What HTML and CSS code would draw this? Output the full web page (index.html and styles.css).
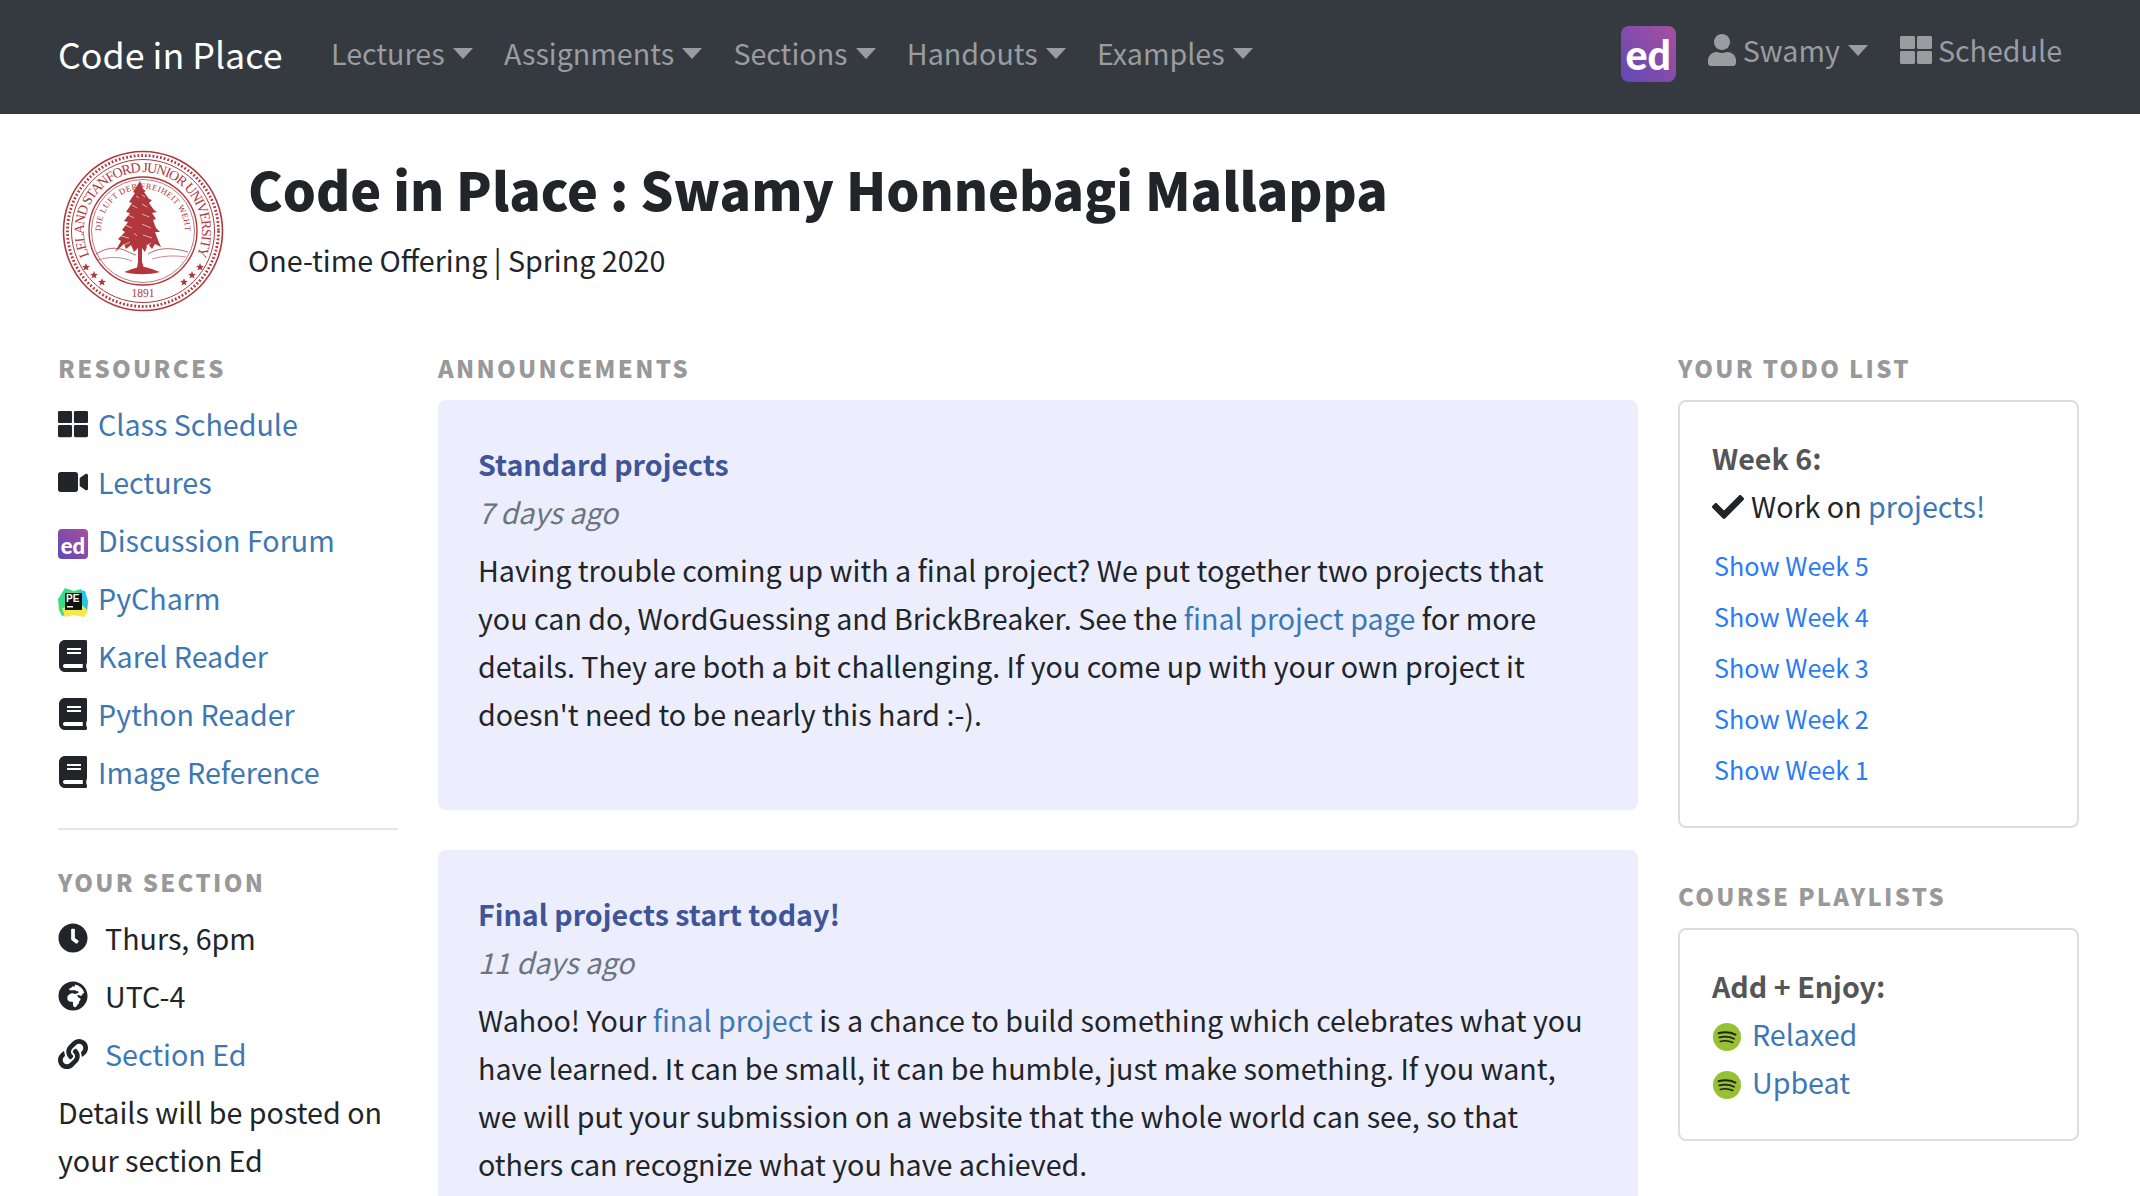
FILE: index.html
```html
<!DOCTYPE html>
<html lang="en">
<head>
    <meta charset="UTF-8">
    <meta name="viewport" content="width=device-width, initial-scale=1.0">
    <title>Code in Place</title>
    <link rel="stylesheet" href="styles.css">
</head>
<body>
    <svg class="icon-defs" aria-hidden="true">
        <symbol id="i-grid" viewBox="0 0 512 512"><path d="M296 32h192c13.255 0 24 10.745 24 24v160c0 13.255-10.745 24-24 24H296c-13.255 0-24-10.745-24-24V56c0-13.255 10.745-24 24-24zm-80 0H24C10.745 32 0 42.745 0 56v160c0 13.255 10.745 24 24 24h192c13.255 0 24-10.745 24-24V56c0-13.255-10.745-24-24-24zM0 296v160c0 13.255 10.745 24 24 24h192c13.255 0 24-10.745 24-24V296c0-13.255-10.745-24-24-24H24c-13.255 0-24 10.745-24 24zm296 184h192c13.255 0 24-10.745 24-24V296c0-13.255-10.745-24-24-24H296c-13.255 0-24 10.745-24 24v160c0 13.255 10.745 24 24 24z"/></symbol>
        <symbol id="i-video" viewBox="0 0 576 512"><path d="M336.2 64H47.8C21.4 64 0 85.4 0 111.8v288.4C0 426.6 21.4 448 47.8 448h288.4c26.4 0 47.8-21.4 47.8-47.8V111.8c0-26.4-21.4-47.8-47.8-47.8zm189.4 37.7L416 177.3v157.4l109.6 75.5c21.2 14.6 50.4-.3 50.4-25.8V127.5c0-25.4-29.1-40.4-50.4-25.8z"/></symbol>
        <symbol id="i-user" viewBox="0 0 448 512"><path d="M224 256c70.7 0 128-57.3 128-128S294.7 0 224 0 96 57.3 96 128s57.3 128 128 128zm89.6 32h-16.7c-22.2 10.2-46.9 16-72.9 16s-50.6-5.8-72.9-16h-16.7C60.2 288 0 348.2 0 422.4V464c0 26.5 21.5 48 48 48h352c26.5 0 48-21.5 48-48v-41.6c0-74.2-60.2-134.4-134.4-134.4z"/></symbol>
        <symbol id="i-book" viewBox="0 0 448 512"><path d="M448 360V24c0-13.3-10.7-24-24-24H96C43 0 0 43 0 96v320c0 53 43 96 96 96h328c13.3 0 24-10.7 24-24v-16c0-7.5-3.5-14.3-8.9-18.7-4.2-15.4-4.2-59.3 0-74.7 5.4-4.3 8.9-11.1 8.9-18.6zM128 134c0-3.3 2.7-6 6-6h212c3.3 0 6 2.7 6 6v20c0 3.3-2.7 6-6 6H134c-3.3 0-6-2.7-6-6v-20zm0 64c0-3.3 2.7-6 6-6h212c3.3 0 6 2.7 6 6v20c0 3.3-2.7 6-6 6H134c-3.3 0-6-2.7-6-6v-20zm253.4 250H96c-17.7 0-32-14.3-32-32 0-17.6 14.4-32 32-32h285.4c-1.9 17.1-1.9 46.9 0 64z"/></symbol>
        <symbol id="i-clock" viewBox="0 0 512 512"><path d="M256,8C119,8,8,119,8,256S119,504,256,504,504,393,504,256,393,8,256,8Zm92.49,313h0l-20,25a16,16,0,0,1-22.49,2.5h0l-67-49.72a40,40,0,0,1-15-31.23V112a16,16,0,0,1,16-16h32a16,16,0,0,1,16,16V256l58,42.5A16,16,0,0,1,348.49,321Z"/></symbol>
        <symbol id="i-globe" viewBox="0 0 496 512"><path d="M248 8C111.03 8 0 119.03 0 256s111.03 248 248 248 248-111.03 248-248S384.97 8 248 8zm160 215.5v6.93c0 5.87-3.32 11.24-8.57 13.86l-15.39 7.7a15.485 15.485 0 0 1-15.53-.97l-18.21-12.14a15.52 15.52 0 0 0-13.5-1.81l-2.65.88c-9.7 3.23-13.66 14.79-7.99 23.3l13.24 19.86c2.87 4.31 7.71 6.9 12.89 6.9h8.21c8.56 0 15.5 6.94 15.5 15.5v11.34c0 3.35-1.09 6.62-3.1 9.3l-18.74 24.98c-1.42 1.9-2.39 4.1-2.83 6.43l-4.3 22.83c-.62 3.29-2.29 6.29-4.76 8.56a159.608 159.608 0 0 0-25 29.16l-13.03 19.55a27.756 27.756 0 0 1-23.09 12.36c-10.51 0-20.12-5.94-24.82-15.34a78.902 78.902 0 0 1-8.33-35.29V367.5c0-8.56-6.94-15.5-15.5-15.5h-25.88c-14.49 0-28.38-5.76-38.63-16a54.659 54.659 0 0 1-16-38.63v-14.06c0-17.19 8.1-33.38 21.85-43.7l27.58-20.69a54.663 54.663 0 0 1 32.78-10.93h.89c8.48 0 16.85 1.97 24.43 5.77l14.72 7.36c3.68 1.84 7.93 2.14 11.83.84l47.31-15.77c6.33-2.11 10.6-8.03 10.6-14.7 0-8.56-6.94-15.5-15.5-15.5h-10.09c-4.11 0-8.05-1.63-10.96-4.54l-6.92-6.92a15.493 15.493 0 0 0-10.96-4.54H199.5c-8.56 0-15.5-6.94-15.5-15.5v-4.4c0-7.11 4.84-13.31 11.74-15.04l14.45-3.61c3.74-.94 7-3.23 9.14-6.44l8.08-12.11c2.87-4.31 7.71-6.9 12.89-6.9h24.2c8.56 0 15.5-6.94 15.5-15.5v-21.7C359.23 71.63 422.86 131.02 441.93 208H423.5c-8.56 0-15.5 6.94-15.5 15.5z"/></symbol>
        <symbol id="i-link" viewBox="0 0 512 512"><path d="M326.612 185.391c59.747 59.809 58.927 155.698.36 214.59-.11.12-.24.25-.36.37l-67.2 67.2c-59.27 59.27-155.699 59.262-214.96 0-59.27-59.26-59.27-155.7 0-214.96l37.106-37.106c9.84-9.84 26.786-3.3 27.294 10.606.648 17.722 3.826 35.527 9.69 52.721 1.986 5.822.567 12.262-3.783 16.612l-13.087 13.087c-28.026 28.026-28.905 73.66-1.155 101.96 28.024 28.579 74.086 28.749 102.325.51l67.2-67.19c28.191-28.191 28.073-73.757 0-101.83-3.701-3.694-7.429-6.564-10.341-8.569a16.037 16.037 0 0 1-6.947-12.606c-.396-10.567 3.348-21.456 11.698-29.806l21.054-21.055c5.521-5.521 14.182-6.199 20.584-1.731a152.482 152.482 0 0 1 20.522 17.197zM467.547 44.449c-59.261-59.262-155.69-59.27-214.96 0l-67.2 67.2c-.12.12-.25.25-.36.37-58.566 58.892-59.387 154.781.36 214.59a152.454 152.454 0 0 0 20.521 17.196c6.402 4.468 15.064 3.789 20.584-1.731l21.054-21.055c8.35-8.35 12.094-19.239 11.698-29.806a16.037 16.037 0 0 0-6.947-12.606c-2.912-2.005-6.64-4.875-10.341-8.569-28.073-28.073-28.191-73.639 0-101.83l67.2-67.19c28.239-28.239 74.3-28.069 102.325.51 27.75 28.3 26.872 73.934-1.155 101.96l-13.087 13.087c-4.35 4.35-5.769 10.79-3.783 16.612 5.864 17.194 9.042 34.999 9.69 52.721.509 13.906 17.454 20.446 27.294 10.606l37.106-37.106c59.271-59.259 59.271-155.699.001-214.959z"/></symbol>
        <symbol id="i-check" viewBox="0 0 512 512"><path d="M173.898 439.404l-166.4-166.4c-9.997-9.997-9.997-26.206 0-36.204l36.203-36.204c9.997-9.998 26.207-9.998 36.204 0L192 312.69 432.095 72.596c9.997-9.997 26.207-9.997 36.204 0l36.203 36.204c9.997 9.997 9.997 26.206 0 36.204l-294.4 294.401c-9.998 9.997-26.207 9.997-36.204-.001z"/></symbol>
        <symbol id="i-spotify" viewBox="0 0 28 28">
            <circle cx="14" cy="14" r="14" fill="#97c034"/>
            <g fill="none" stroke="#1c2412" stroke-linecap="round">
                <path d="M5.500 10.200c5.500-1.500 12-1.100 17 1.400" stroke-width="2"/>
                <path d="M6.300 14.400c4.800-1.200 10.500-.8 14.800 1.300" stroke-width="1.800"/>
                <path d="M7.200 18.400c4.200-1 8.800-.7 12.600 1.100" stroke-width="1.500"/>
            </g>
        </symbol>
        <symbol id="i-star" viewBox="0 0 10 10"><path d="M5 0l1.300 3.400 3.700.2-2.900 2.300 1 3.600L5 7.400 1.900 9.500l1-3.600L0 3.600l3.700-.2z"/></symbol>
    </svg>

    <nav class="navbar">
        <a class="brand" href="#">Code in Place</a>
        <ul class="nav-menu">
            <li class="nav-link caret">Lectures</li>
            <li class="nav-link caret">Assignments</li>
            <li class="nav-link caret">Sections</li>
            <li class="nav-link caret">Handouts</li>
            <li class="nav-link caret">Examples</li>
        </ul>
        <div class="nav-right">
            <span class="ed-logo ed-large">ed</span>
            <span class="nav-link caret nav-user"><svg class="nav-icon user-icon"><use href="#i-user"/></svg>Swamy</span>
            <span class="nav-link nav-schedule"><svg class="nav-icon grid-icon"><use href="#i-grid"/></svg>Schedule</span>
        </div>
    </nav>

    <header class="page-header">
        <svg class="seal" viewBox="0 0 162 162" role="img" aria-label="Stanford seal">
            <defs>
                <path id="seal-outer" d="M81 140a59 59 0 1 1 .01 0"/>
                <path id="seal-motto" d="M81 123a42 42 0 1 1 .01 0"/>
            </defs>
            <g fill="none" stroke="#b0373c">
                <circle cx="81" cy="81" r="79.500" stroke-width="1.600"/>
                <circle cx="81" cy="81" r="75.500" stroke-width="2.800" stroke-dasharray="1.800 2"/>
                <circle cx="81" cy="81" r="71.500" stroke-width="1"/>
                <circle cx="81" cy="81" r="54" stroke-width="1.400"/>
                <circle cx="81" cy="81" r="51.500" stroke-width=".7"/>
                <path d="M34 104c8-5 16-7 25-5 5 1 10 5 15 6M86 104c8-5 20-8 40-2" stroke-width=".8"/>
                <path d="M36 110c12-4 24-3 34 1M90 109c10-3 22-4 34-2" stroke-width=".6"/>
            </g>
            <g class="seal-text">
                <text font-size="14"><textPath href="#seal-outer" startOffset="50%" text-anchor="middle" textLength="236">LELAND STANFORD JUNIOR UNIVERSITY</textPath></text>
                <text font-size="8.500"><textPath href="#seal-motto" startOffset="50%" text-anchor="middle" textLength="132">DIE LUFT DER FREIHEIT WEHT</textPath></text>
                <text x="81" y="147" font-size="11.500" text-anchor="middle">1891</text>
            </g>
            <path class="seal-tree" d="M78 31L81 39L84 41L82 42L87 49L90 50L87 53L92 60L95 62L90 63L94 69L91 70L94 78L98 82L93 82L96 90L99 97L93 94L90 99L86 94L83 102L80 98L80 112L82 118L86 122L72 122L75 118L76 112L76 98L72 102L69 95L64 99L62 94L53 102L59 91L56 89L63 82L60 80L66 72L62 71L68 63L64 62L70 53L67 52L73 43L71 42Z"/>
            <path class="seal-flecks" d="M74 46l3 2M80 45l3 2M70 55l5 3M80 54l5 3M66 65l6 3M80 64l7 3M63 75l7 3M80 74l9 4M59 86l8 2M72 83l3 3M81 85l9 3M62 95l6-3M84 96l5-3"/>
            <path class="seal-tree" d="M62 122c8-3 13-5 18-5s10 2 18 5c-11 3-25 3-36 0z"/>
            <g class="seal-stars">
                <use href="#i-star" x="20" y="113" width="8" height="8"/>
                <use href="#i-star" x="28" y="121" width="8" height="8"/>
                <use href="#i-star" x="36" y="128" width="8" height="8"/>
                <use href="#i-star" x="134" y="113" width="8" height="8"/>
                <use href="#i-star" x="126" y="121" width="8" height="8"/>
                <use href="#i-star" x="118" y="128" width="8" height="8"/>
            </g>
        </svg>
        <div class="header-text">
            <h1>Code in Place : Swamy Honnebagi Mallappa</h1>
            <p class="subtitle">One-time Offering | Spring 2020</p>
        </div>
    </header>

    <main class="layout">
        <aside class="col-left">
            <h2 class="section-title">Resources</h2>
            <ul class="side-list">
                <li class="side-item"><svg class="side-icon"><use href="#i-grid"/></svg><a href="#">Class Schedule</a></li>
                <li class="side-item"><svg class="side-icon"><use href="#i-video"/></svg><a href="#">Lectures</a></li>
                <li class="side-item"><span class="ed-logo ed-small">ed</span><a href="#">Discussion Forum</a></li>
                <li class="side-item">
                    <svg class="side-icon pe-icon" viewBox="0 0 30 30">
                        <path d="M0 12 7 1l9 3 7-2 7 12-1 9-6 6-10-2-9 2-3-6z" fill="#3ddc84"/>
                        <path d="M21 3l6 1 3 10-1 9-5-5z" fill="#28c4e8"/>
                        <path d="M4 21l20-3 6 6-4 6-10-2-9 2z" fill="#f4e84a"/>
                        <rect x="7" y="6" width="17" height="17" fill="#111"/>
                        <text class="pe-text" x="8" y="14.500">PE</text>
                        <rect x="9" y="19" width="6" height="1.500" fill="#fff"/>
                    </svg><a href="#">PyCharm</a>
                </li>
                <li class="side-item"><svg class="side-icon book-icon"><use href="#i-book"/></svg><a href="#">Karel Reader</a></li>
                <li class="side-item"><svg class="side-icon book-icon"><use href="#i-book"/></svg><a href="#">Python Reader</a></li>
                <li class="side-item"><svg class="side-icon book-icon"><use href="#i-book"/></svg><a href="#">Image Reference</a></li>
            </ul>
            <hr class="side-rule">
            <h2 class="section-title">Your Section</h2>
            <ul class="side-list section-list">
                <li class="side-item"><svg class="side-icon"><use href="#i-clock"/></svg>Thurs, 6pm</li>
                <li class="side-item"><svg class="side-icon"><use href="#i-globe"/></svg>UTC-4</li>
                <li class="side-item"><svg class="side-icon"><use href="#i-link"/></svg><a href="#">Section Ed</a></li>
            </ul>
            <p class="side-note">Details will be posted on your section Ed</p>
        </aside>

        <section class="col-center">
            <h2 class="section-title">Announcements</h2>
            <article class="announcement">
                <h3 class="announcement-title">Standard projects</h3>
                <p class="announcement-date">7 days ago</p>
                <p class="announcement-body">Having trouble coming up with a final project? We put together two projects that you can do, WordGuessing and BrickBreaker. See the <a href="#">final project page</a> for more details. They are both a bit challenging. If you come up with your own project it doesn't need to be nearly this hard :-).</p>
            </article>
            <article class="announcement">
                <h3 class="announcement-title">Final projects start today!</h3>
                <p class="announcement-date">11 days ago</p>
                <p class="announcement-body">Wahoo! Your <a href="#">final project</a> is a chance to build something which celebrates what you have learned. It can be small, it can be humble, just make something. If you want, we will put your submission on a website that the whole world can see, so that others can recognize what you have achieved.</p>
            </article>
        </section>

        <aside class="col-right">
            <h2 class="section-title">Your Todo List</h2>
            <div class="side-card todo-card">
                <div class="card-heading">Week 6:</div>
                <div class="todo-line"><svg class="check-icon"><use href="#i-check"/></svg>Work on <a href="#">projects!</a></div>
                <ul class="week-list">
                    <li><a href="#">Show Week 5</a></li>
                    <li><a href="#">Show Week 4</a></li>
                    <li><a href="#">Show Week 3</a></li>
                    <li><a href="#">Show Week 2</a></li>
                    <li><a href="#">Show Week 1</a></li>
                </ul>
            </div>
            <h2 class="section-title playlists-title">Course Playlists</h2>
            <div class="side-card">
                <div class="card-heading">Add + Enjoy:</div>
                <div class="playlist-line"><svg class="spotify-icon"><use href="#i-spotify"/></svg><a href="#">Relaxed</a></div>
                <div class="playlist-line"><svg class="spotify-icon"><use href="#i-spotify"/></svg><a href="#">Upbeat</a></div>
            </div>
        </aside>
    </main>
</body>
</html>
```

FILE: styles.css
```css
html, body {
    margin: 0;
    padding: 0;
    height: 100%;
    overflow: hidden;
}

body {
    font-family: "Noto Sans CJK JP", "Noto Sans", sans-serif;
    font-size: 28.650px;
    line-height: 48px;
    color: #212529;
    background: #fff;
}

a {
    color: #3d78b5;
    text-decoration: none;
}

ul {
    list-style: none;
    margin: 0;
    padding: 0;
}

p {
    margin: 0;
}

.icon-defs {
    display: none;
}

/* top bar */
.navbar {
    display: flex;
    align-items: center;
    box-sizing: border-box;
    height: 114px;
    padding: 0 58px 8px;
    background: #343a40;
}

.brand {
    color: #fff;
    font-size: 35.800px;
    margin-right: 48.500px;
}

.nav-menu {
    display: flex;
    gap: 31.300px;
}

.nav-link {
    color: #9a9c9f;
}

.caret::after {
    content: "";
    display: inline-block;
    margin-left: 8px;
    vertical-align: 6px;
    border-top: 11px solid #9a9c9f;
    border-left: 10px solid transparent;
    border-right: 10px solid transparent;
}

.nav-right {
    display: flex;
    align-items: center;
    margin-left: auto;
    gap: 32px;
    padding-right: 20px;
}

.nav-user, .nav-schedule {
    position: relative;
    top: -3px;
}

.nav-icon {
    fill: #9a9c9f;
    vertical-align: -4px;
}

.user-icon {
    width: 28px;
    height: 32px;
    margin-right: 7px;
}

.grid-icon {
    width: 32px;
    height: 32px;
    margin-right: 6px;
}

.ed-logo {
    display: inline-flex;
    align-items: center;
    justify-content: center;
    flex: none;
    color: #fff;
    font-family: "Lato", sans-serif;
    font-weight: 900;
    background: linear-gradient(45deg, #6049b6, #a84f9f);
}

.ed-large {
    box-sizing: border-box;
    width: 55px;
    height: 56px;
    margin-top: 2px;
    padding-top: 2px;
    border-radius: 8px;
    font-size: 41px;
}

.ed-small {
    box-sizing: border-box;
    width: 30px;
    height: 30px;
    margin: 8px 10px 0 0;
    padding-top: 3px;
    border-radius: 4px;
    font-size: 22px;
    line-height: 30px;
}

/* page header */
.page-header {
    display: flex;
    padding: 36px 58px 40px 62px;
}

.seal {
    flex: none;
    width: 162px;
    height: 162px;
    margin-right: 24px;
}

.seal-text {
    font-family: "Liberation Serif", serif;
    fill: #b0373c;
}

.seal-tree, .seal-stars {
    fill: #b0373c;
}

.seal-flecks {
    fill: none;
    stroke: #fff;
    stroke-width: .8;
    opacity: .75;
}

.page-header h1 {
    margin: -3px 0 0;
    font-size: 52.100px;
    line-height: 84px;
    font-weight: 900;
}

.subtitle {
    margin-top: 5px;
}

/* three columns */
.layout {
    display: grid;
    grid-template-columns: 340px 1200px 401px;
    column-gap: 40px;
    padding-left: 58px;
}

.section-title {
    margin: 0 0 16px;
    font-size: 23.800px;
    line-height: 32px;
    font-weight: 900;
    letter-spacing: 2.330px;
    text-transform: uppercase;
    color: #999;
}

.side-item {
    display: flex;
    align-items: center;
    height: 48px;
    margin-bottom: 10px;
}

.side-icon {
    flex: none;
    width: 30px;
    height: 30px;
    margin-right: 10px;
    fill: #212529;
}

.pe-icon {
    margin-top: 8px;
}

.pe-text {
    font-family: "Liberation Sans", sans-serif;
    font-size: 10px;
    font-weight: 700;
    fill: #fff;
}

.book-icon {
    width: 28px;
    height: 32px;
    margin-left: 1px;
    margin-right: 11px;
}

.section-list .side-icon {
    margin-right: 17px;
}

.side-rule {
    margin: 32px 0 36px;
    border: 0;
    border-top: 2px solid #e5e5e5;
}

.announcement {
    padding: 40px 40px 72px;
    margin-bottom: 40px;
    background: #eceefd;
    border-radius: 8px;
}

.announcement-title {
    margin: 0;
    font-size: 28.650px;
    line-height: 48px;
    font-weight: 700;
    color: #3f5597;
}

.announcement-date {
    font-style: italic;
    color: #6c757d;
}

.announcement-body {
    margin-top: 10px;
}

.side-card {
    padding: 32px 32px 33px;
    border: 2px solid #ddd;
    border-radius: 8px;
}

.todo-card {
    padding-bottom: 36px;
}

.card-heading {
    font-weight: 700;
    color: #555;
}

.check-icon {
    width: 32px;
    height: 32px;
    margin-right: 7px;
    fill: #212529;
    vertical-align: -5px;
}

.week-list {
    margin: 14px 0 0 2px;
    font-size: 25.200px;
    line-height: 42px;
}

.week-list li {
    margin-bottom: 9px;
}

.week-list li:last-child {
    margin-bottom: 0;
}

.week-list a {
    color: #2b7bf3;
}

.playlists-title {
    margin-top: 52px;
}

.playlist-line {
    display: flex;
    align-items: center;
}

.spotify-icon {
    flex: none;
    width: 28px;
    height: 28px;
    margin: 6px 11px 0 1px;
}
```
